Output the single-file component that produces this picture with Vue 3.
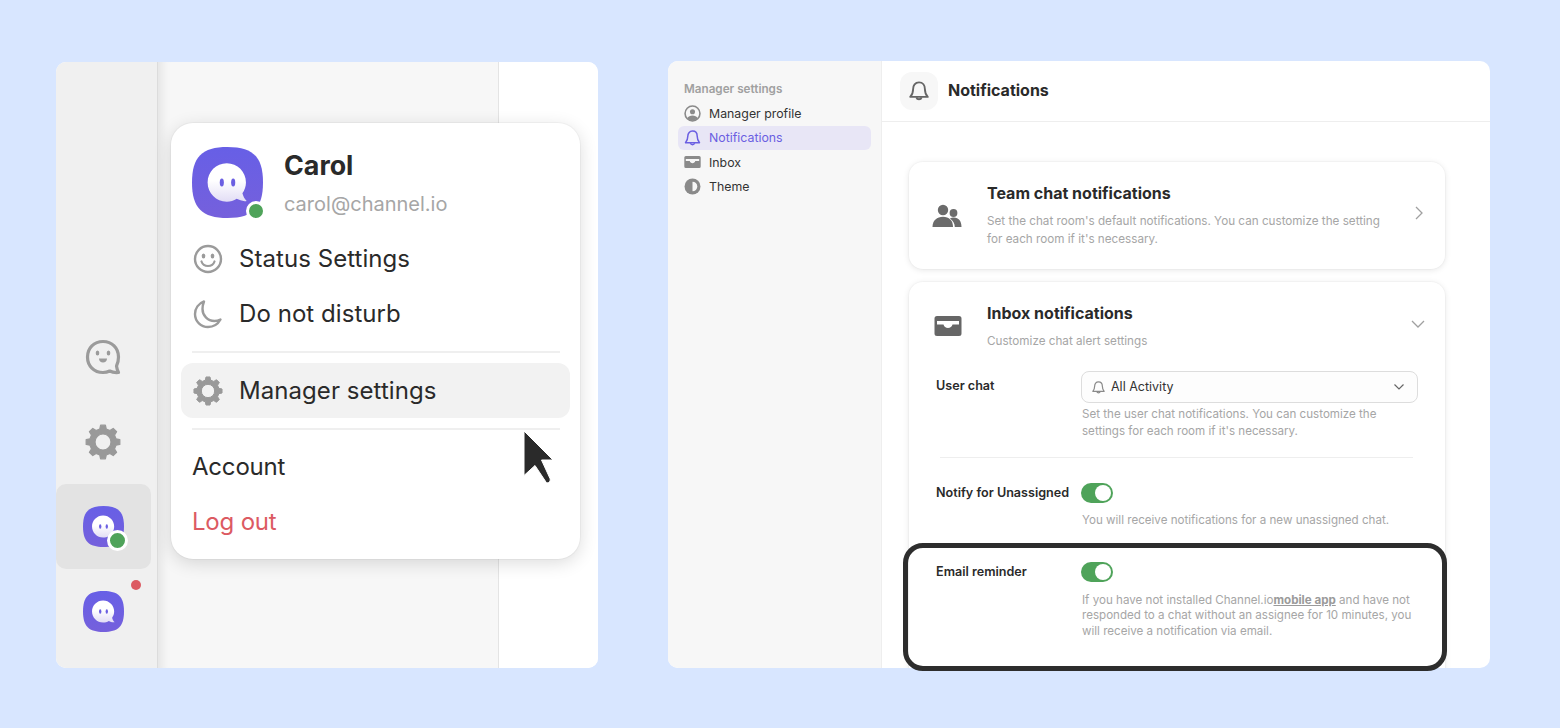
<template>
  <div class="page">
    <!-- shared icons -->
    <svg class="defs" width="0" height="0" aria-hidden="true">
      <defs>
        <linearGradient id="bubbleFill" x1="0" y1="0" x2="0" y2="1">
          <stop offset="0.45" stop-color="#ffffff" />
          <stop offset="1" stop-color="#e2ddf5" />
        </linearGradient>
        <linearGradient id="logoFill" x1="0" y1="0" x2="0" y2="1">
          <stop offset="0" stop-color="#675fe6" />
          <stop offset="1" stop-color="#7560dc" />
        </linearGradient>
        <symbol id="logo" viewBox="0 0 100 100">
          <path d="M50 0C86 0 100 14 100 50C100 86 86 100 50 100C14 100 0 86 0 50C0 14 14 0 50 0Z" fill="url(#logoFill)" />
          <path d="M49 23C64 23 76 35 76 50C76 56 74 61 71 65C72 69 74 73 77 76C72 77 67 75 63 73C59 76 54 77 49 77C34 77 22 65 22 50C22 35 34 23 49 23Z" fill="url(#bubbleFill)" />
          <ellipse cx="42" cy="50" rx="2.900" ry="5.600" fill="#6b5fe2" />
          <ellipse cx="58" cy="50" rx="2.900" ry="5.600" fill="#6b5fe2" />
        </symbol>
        <symbol id="gear" viewBox="0 0 36 36">
          <path :d="gearPath" fill="currentColor" stroke="currentColor" stroke-width="1.200" stroke-linejoin="round" fill-rule="evenodd" />
        </symbol>
        <symbol id="bell" viewBox="2 1.500 16 16">
          <path d="M10 2.600C6.900 2.600 5.300 5 5.300 7.800C5.300 11.200 4.400 12.600 3 14.200H17C15.600 12.600 14.700 11.200 14.700 7.800C14.700 5 13.100 2.600 10 2.600Z" fill="none" stroke="currentColor" stroke-width="1.500" stroke-linejoin="round" />
          <path d="M7.900 14.600A2.200 2.200 0 0 0 12.100 14.600" fill="none" stroke="currentColor" stroke-width="1.500" />
        </symbol>
        <symbol id="tray" viewBox="0 0 28 22">
          <path fill-rule="evenodd" d="M3 1H25A2.500 2.500 0 0 1 27.500 3.500V18.500A2.500 2.500 0 0 1 25 21H3A2.500 2.500 0 0 1 .5 18.500V3.500A2.500 2.500 0 0 1 3 1ZM3 6V9.500H9.500C10 11.800 11.800 13 14 13C16.200 13 18 11.800 18.500 9.500H25V6Z" fill="currentColor" />
        </symbol>
      </defs>
    </svg>

    <!-- 左侧：Desk 弹出菜单 -->
    <section class="desk">
      <nav class="rail">
        <div class="rail-item">
          <svg class="rail-icon" viewBox="0 0 36 36" fill="none">
            <path d="M18 2.500C27 2.500 33.500 9 33.500 18C33.500 21.500 32.800 24.500 31.500 27C31.800 29.500 32.500 31.500 33.500 33.500C30 33.800 27 33.300 24.700 32C22.700 33 20.500 33.500 18 33.500C9 33.500 2.500 27 2.500 18C2.500 9 9 2.500 18 2.500Z" stroke="#9b9b9b" stroke-width="3.200" stroke-linejoin="round" />
            <ellipse cx="12.500" cy="14" rx="1.800" ry="2.600" fill="#9b9b9b" />
            <ellipse cx="23.500" cy="14" rx="1.800" ry="2.600" fill="#9b9b9b" />
            <path d="M14 19.500H22C22 22 20.200 23.500 18 23.500C15.800 23.500 14 22 14 19.500Z" fill="#9b9b9b" />
          </svg>
        </div>
        <div class="rail-item">
          <svg class="rail-icon rail-gear"><use href="#gear" /></svg>
        </div>
        <div class="rail-item active">
          <div class="rail-avatar">
            <svg class="logo-fill"><use href="#logo" /></svg>
            <span class="status-dot rail-status"></span>
          </div>
        </div>
        <div class="rail-item">
          <div class="rail-avatar">
            <svg class="logo-fill"><use href="#logo" /></svg>
            <span class="alert-dot"></span>
          </div>
        </div>
      </nav>
      <div class="desk-middle"></div>
      <div class="desk-right"></div>

      <!-- 弹出菜单 -->
      <div class="popup">
        <div class="profile">
          <div class="profile-avatar">
            <svg class="logo-fill"><use href="#logo" /></svg>
            <span class="status-dot profile-status"></span>
          </div>
          <div class="profile-text">
            <div class="profile-name">Carol</div>
            <div class="profile-mail">carol@channel.io</div>
          </div>
        </div>
        <div class="menu-row">
          <svg class="menu-icon" viewBox="0 0 30 30" fill="none">
            <circle cx="15" cy="15" r="13" stroke="#9b9b9b" stroke-width="2.400" />
            <ellipse cx="10.500" cy="12" rx="1.800" ry="2.500" fill="#9b9b9b" />
            <ellipse cx="19.500" cy="12" rx="1.800" ry="2.500" fill="#9b9b9b" />
            <path d="M8.500 17.500C9.500 20.500 12 22 15 22C18 22 20.500 20.500 21.500 17.500" stroke="#9b9b9b" stroke-width="2.200" stroke-linecap="round" />
          </svg>
          <span>Status Settings</span>
        </div>
        <div class="menu-row">
          <svg class="menu-icon" viewBox="0 0 30 30" fill="none">
            <path d="M11 2.500C5.500 4.500 2 9.500 2 15C2 22.500 8 28 15 28C20.500 28 25 25 27.500 20.500C25.500 21.500 23.500 22 21.500 22C14.500 22 9.500 16.500 9.500 10C9.500 7.500 10 5 11 2.500Z" stroke="#9b9b9b" stroke-width="2.400" stroke-linejoin="round" />
          </svg>
          <span>Do not disturb</span>
        </div>
        <div class="menu-line"></div>
        <div class="menu-row hovered">
          <svg class="menu-icon menu-gear"><use href="#gear" /></svg>
          <span>Manager settings</span>
        </div>
        <div class="menu-line lower"></div>
        <div class="menu-row plain">Account</div>
        <div class="menu-row plain logout">Log out</div>
      </div>

      <svg class="cursor" viewBox="0 0 31 56">
        <path d="M1 1L30 30L18.500 30L27 48.500C27.600 50.500 27 51.500 25.500 52.500C24 53.200 23 52.500 22.300 51L12 35.500L1 45.500Z" fill="#2a2a2a" stroke="#ffffff" stroke-width="1" />
      </svg>
    </section>

    <!-- 右侧：通知设置 -->
    <div class="settings-wrap">
      <section class="settings">
        <aside class="side">
          <div class="side-title">Manager settings</div>
          <div class="side-item">
            <svg class="side-icon" viewBox="0 0 16 16">
              <circle cx="8" cy="8" r="7" fill="none" stroke="#8a8a8a" stroke-width="1.500" />
              <circle cx="8" cy="6.300" r="2.400" fill="#8a8a8a" />
              <path d="M3 12.500C4 10.500 6 9.800 8 9.800C10 9.800 12 10.500 13 12.500C11.700 14 10 14.800 8 14.800C6 14.800 4.300 14 3 12.500Z" fill="#8a8a8a" />
            </svg>
            <span>Manager profile</span>
          </div>
          <div class="side-item current">
            <svg class="side-icon side-bell"><use href="#bell" /></svg>
            <span>Notifications</span>
          </div>
          <div class="side-item">
            <svg class="side-icon side-tray"><use href="#tray" /></svg>
            <span>Inbox</span>
          </div>
          <div class="side-item">
            <svg class="side-icon" viewBox="0 0 16 16">
              <circle cx="8" cy="8" r="7.500" fill="#8a8a8a" />
              <path d="M8 3.500A4.500 4.500 0 0 1 8 12.500Z" fill="#f7f7f7" />
            </svg>
            <span>Theme</span>
          </div>
        </aside>

        <div class="main">
          <header class="main-head">
            <div class="head-icon"><svg class="head-bell"><use href="#bell" /></svg></div>
            <h1>Notifications</h1>
          </header>

          <div class="main-body">
            <div class="card team-card">
              <svg class="card-icon people" viewBox="0 0 30 24">
                <circle cx="11" cy="6" r="5.200" fill="#6b6b6b" />
                <circle cx="21.500" cy="9" r="3.900" fill="#6b6b6b" />
                <path d="M.5 23C.5 16.500 5 12.800 11 12.800C17 12.800 21 16.500 21 23Z" fill="#6b6b6b" />
                <path d="M18 14.500C19.300 13.700 20.500 13.500 22 13.500C26.500 13.500 29.500 17 29.500 23H22.800C22.800 19.500 21 16.500 18 14.500Z" fill="#6b6b6b" />
              </svg>
              <div class="card-text">
                <h2>Team chat notifications</h2>
                <p>Set the chat room's default notifications. You can customize the setting for each room if it's necessary.</p>
              </div>
              <svg class="chevron-right" viewBox="0 0 10 16" fill="none">
                <path d="M2 2L8 8L2 14" stroke="#a0a0a0" stroke-width="1.300" />
              </svg>
            </div>

            <div class="card inbox-card">
              <div class="inbox-head">
                <svg class="card-icon inbox-icon"><use href="#tray" /></svg>
                <div class="card-text">
                  <h2>Inbox notifications</h2>
                  <p>Customize chat alert settings</p>
                </div>
                <svg class="chevron-down" viewBox="0 0 16 10" fill="none">
                  <path d="M2 2L8 8L14 2" stroke="#a0a0a0" stroke-width="1.300" />
                </svg>
              </div>

              <div class="opt-row">
                <div class="opt-label">User chat</div>
                <div class="opt-value">
                  <div class="select">
                    <svg class="select-bell"><use href="#bell" /></svg>
                    <span class="select-text">All Activity</span>
                    <svg class="select-arrow" viewBox="0 0 12 8" fill="none">
                      <path d="M1.500 1.500L6 6L10.500 1.500" stroke="#666666" stroke-width="1.200" />
                    </svg>
                  </div>
                  <p class="opt-desc">Set the user chat notifications. You can customize the settings for each room if it's necessary.</p>
                </div>
              </div>
              <div class="opt-line"></div>
              <div class="opt-row unassigned">
                <div class="opt-label">Notify for Unassigned</div>
                <div class="opt-value">
                  <div class="toggle"><span></span></div>
                  <p class="opt-desc toggle-desc">You will receive notifications for a new unassigned chat.</p>
                </div>
              </div>
              <div class="opt-row reminder">
                <div class="opt-label">Email reminder</div>
                <div class="opt-value">
                  <div class="toggle"><span></span></div>
                  <p class="opt-desc toggle-desc">If you have not installed Channel.io<b>mobile app</b> and have not responded to a chat without an assignee for 10 minutes, you will receive a notification via email.</p>
                </div>
              </div>
            </div>
          </div>
        </div>
      </section>
      <div class="highlight"></div>
    </div>
  </div>
</template>

<script setup>
// 齿轮轮廓：8个齿 + 中间圆孔
const buildGear = () => {
  const c = 18
  const outer = 17
  const root = 13.4
  const teeth = 8
  const pts = []
  for (let i = 0; i < teeth; i++) {
    const a = (i / teeth) * Math.PI * 2 - Math.PI / 2
    const w = Math.PI / teeth
    const list = [
      [root, a - w * 0.62],
      [outer, a - w * 0.36],
      [outer, a + w * 0.36],
      [root, a + w * 0.62],
    ]
    list.forEach(([r, t]) => {
      pts.push(`${(c + r * Math.cos(t)).toFixed(2)} ${(c + r * Math.sin(t)).toFixed(2)}`)
    })
  }
  const hole = 8
  return `M${pts.join('L')}ZM${c - hole} ${c}a${hole} ${hole} 0 1 0 ${hole * 2} 0a${hole} ${hole} 0 1 0 ${-hole * 2} 0Z`
}

const gearPath = buildGear()
</script>

<style>
html,
body {
  margin: 0;
  background: #d8e6ff;
}
</style>

<style scoped>
.page {
  width: 1560px;
  height: 728px;
  overflow: hidden;
  display: flex;
  align-items: flex-start;
  padding: 61px 0 0 56px;
  box-sizing: border-box;
  font-family: Inter, 'Liberation Sans', sans-serif;
  color: #2a2a2a;
}

.defs {
  position: absolute;
}

/* ---------- left panel ---------- */
.desk {
  position: relative;
  width: 542px;
  height: 606px;
  margin-top: 1px;
  display: flex;
  border-radius: 10px;
  overflow: hidden;
  background: #fff;
}

.rail {
  width: 102px;
  flex: none;
  box-sizing: border-box;
  background: #f0f0f0;
  border-right: 1px solid #dcdcdc;
  display: flex;
  flex-direction: column;
  justify-content: flex-end;
  padding-bottom: 14px;
}

.rail-item {
  width: 95px;
  height: 85px;
  box-sizing: border-box;
  padding-right: 1px;
  display: flex;
  align-items: center;
  justify-content: center;
  border-radius: 10px;
}

.rail-item.active {
  background: #e3e3e3;
}

.rail-icon {
  width: 36px;
  height: 36px;
  color: #999;
}

.rail-avatar {
  position: relative;
  width: 41px;
  height: 41px;
}

.logo-fill {
  display: block;
  width: 100%;
  height: 100%;
}

.status-dot {
  position: absolute;
  box-sizing: border-box;
  border-radius: 50%;
  background: #4fa35a;
  border: 3px solid #fff;
}

.rail-status {
  width: 21px;
  height: 21px;
  right: -4px;
  bottom: -4px;
}

.alert-dot {
  position: absolute;
  width: 10px;
  height: 10px;
  border-radius: 50%;
  background: #dc5a62;
  right: -17px;
  top: -11px;
}

.desk-middle {
  width: 341px;
  flex: none;
  box-sizing: border-box;
  background: #f7f7f7;
  border-right: 1px solid #e4e4e4;
  box-shadow: inset 12px 0 10px -8px rgba(0, 0, 0, 0.08);
}

.desk-right {
  flex: 1;
  background: #fff;
}

.popup {
  position: absolute;
  left: 115px;
  top: 61px;
  width: 409px;
  height: 436px;
  box-sizing: border-box;
  padding: 24px 10px 10px;
  background: #fff;
  border-radius: 22px;
  box-shadow: 0 0 0 1px rgba(0, 0, 0, 0.03), 0 4px 18px rgba(0, 0, 0, 0.14);
}

.profile {
  display: flex;
  gap: 21px;
  padding-left: 11px;
  height: 71px;
  margin-bottom: 13px;
}

.profile-avatar {
  position: relative;
  width: 71px;
  height: 71px;
}

.profile-status {
  width: 20px;
  height: 20px;
  right: -3px;
  bottom: -3px;
}

.profile-name {
  font-size: 26.800px;
  font-weight: 700;
  line-height: 36px;
}

.profile-mail {
  font-size: 20px;
  line-height: 28px;
  margin-top: 7px;
  color: #a6a6a6;
}

.menu-row {
  height: 55px;
  display: flex;
  align-items: center;
  gap: 16px;
  padding-left: 12px;
  border-radius: 12px;
  font-size: 24px;
  letter-spacing: 0.06px;
}

.menu-row.hovered {
  background: #f2f2f2;
}

.menu-row.plain {
  padding-left: 11px;
  letter-spacing: -0.2px;
}

.logout {
  color: #dc5a62;
}

.menu-icon {
  width: 30px;
  height: 30px;
  flex: none;
  color: #999;
}

.menu-line {
  height: 2px;
  margin: 10px 10px 10px 11px;
  background: #efefef;
}

.menu-line.lower {
  margin-bottom: 9px;
}

.cursor {
  position: absolute;
  left: 467px;
  top: 368px;
  width: 31px;
  height: 56px;
}

/* ---------- right panel ---------- */
.settings-wrap {
  position: relative;
  width: 822px;
  height: 607px;
  margin-left: 70px;
}

.settings {
  width: 100%;
  height: 100%;
  display: flex;
  background: #fff;
  border-radius: 10px;
  overflow: hidden;
}

.side {
  width: 214px;
  flex: none;
  box-sizing: border-box;
  padding: 20px 10px 0 10px;
  background: #f7f7f7;
  border-right: 1px solid #eeeeee;
}

.side-title {
  padding-left: 6px;
  font-size: 11.700px;
  font-weight: 600;
  line-height: 16px;
  color: #a0a0a0;
  margin-bottom: 4px;
}

.side-item {
  height: 24.500px;
  display: flex;
  align-items: center;
  gap: 8px;
  padding-left: 6px;
  border-radius: 6px;
  font-size: 12.350px;
  color: #333;
}

.side-icon {
  width: 17px;
  height: 17px;
  flex: none;
  color: #8a8a8a;
}

.side-bell {
  height: 16px;
}

.side-tray {
  height: 14px;
}

.side-item.current {
  background: #e8e6f6;
  color: #6b5fe2;
}

.side-item.current .side-icon {
  color: #6b5fe2;
}

.main {
  flex: 1;
  min-width: 0;
  display: flex;
  flex-direction: column;
}

.main-head {
  height: 61px;
  flex: none;
  box-sizing: border-box;
  display: flex;
  align-items: center;
  gap: 10px;
  padding-left: 18px;
  border-bottom: 1px solid #eeeeee;
}

.head-icon {
  width: 38px;
  height: 38px;
  display: flex;
  align-items: center;
  justify-content: center;
  background: #f7f7f7;
  border-radius: 12px;
  color: #666;
}

.head-bell {
  width: 20px;
  height: 20px;
}

.main-head h1 {
  margin: 0 0 2px;
  font-size: 16px;
  font-weight: 700;
  color: #2a2a2a;
}

.main-body {
  padding: 40px 0 0 27px;
}

.card {
  width: 536px;
  box-sizing: border-box;
  background: #fff;
  border-radius: 14px;
  box-shadow: 0 0 0 1px rgba(0, 0, 0, 0.02), 0 1px 6px rgba(0, 0, 0, 0.1);
}

.team-card {
  height: 107px;
  display: flex;
  align-items: flex-start;
  padding: 21px 21px 0 24px;
  margin-bottom: 13px;
}

.card-icon {
  flex: none;
  color: #666;
}

.people {
  width: 30px;
  height: 24px;
  margin-top: 21px;
  margin-left: -1px;
  margin-right: 25px;
}

.card-text h2 {
  margin: 0;
  font-size: 16px;
  font-weight: 700;
  line-height: 20px;
}

.card-text p {
  margin: 9px 0 0;
  font-size: 11.700px;
  line-height: 18px;
  color: #a6a6a6;
}

.team-card .card-text {
  width: 396px;
}

.chevron-right {
  width: 10px;
  height: 16px;
  margin-left: auto;
  margin-top: 22px;
}

.inbox-card {
  height: 400px;
  padding-top: 21px;
}

.inbox-head {
  display: flex;
  align-items: flex-start;
  padding: 0 19px 0 25px;
  height: 68px;
}

.inbox-icon {
  width: 28px;
  height: 22px;
  margin-top: 12px;
  margin-right: 25px;
}

.chevron-down {
  width: 16px;
  height: 10px;
  margin-left: auto;
  margin-top: 16px;
}

.opt-row {
  display: flex;
  padding-left: 27px;
}

.opt-label {
  width: 145px;
  flex: none;
  font-size: 12.600px;
  font-weight: 600;
  line-height: 30px;
  color: #2a2a2a;
  white-space: nowrap;
}

.opt-value {
  width: 337px;
}

.select {
  height: 32px;
  box-sizing: border-box;
  display: flex;
  align-items: center;
  padding: 0 17px 0 10px;
  border: 1px solid #dddddd;
  border-radius: 8px;
  background: #fdfdfd;
  font-size: 12.500px;
  color: #333;
}

.select-text {
  margin-bottom: 2px;
}

.select-bell {
  width: 13px;
  height: 13px;
  margin-right: 6px;
  color: #8a8a8a;
}

.select-arrow {
  width: 12px;
  height: 8px;
  margin-left: auto;
  margin-right: -5px;
}

.opt-desc {
  margin: 3px 0 0 1px;
  font-size: 11.600px;
  line-height: 16.500px;
  color: #a6a6a6;
}

.opt-desc b {
  font-weight: 700;
  color: #9a9a9a;
  text-decoration: underline;
}

.opt-line {
  height: 1px;
  margin: 18px 32px 0 31px;
  background: #eeeeee;
}

.unassigned {
  margin-top: 25px;
}

.unassigned .opt-label,
.reminder .opt-label {
  line-height: 20px;
}

.reminder {
  margin-top: 33px;
}

.toggle {
  width: 32px;
  height: 20px;
  box-sizing: border-box;
  padding: 2px;
  border-radius: 10px;
  background: #4fa35a;
  display: flex;
  justify-content: flex-end;
}

.toggle span {
  width: 16px;
  height: 16px;
  border-radius: 50%;
  background: #fff;
}

.toggle-desc {
  margin-top: 9px;
}

.reminder .toggle-desc {
  margin-top: 11px;
  line-height: 15.800px;
}

.highlight {
  position: absolute;
  left: 235px;
  top: 482px;
  width: 544px;
  height: 128px;
  box-sizing: border-box;
  border: 5px solid #2d2d2d;
  border-radius: 20px;
  pointer-events: none;
}
</style>
